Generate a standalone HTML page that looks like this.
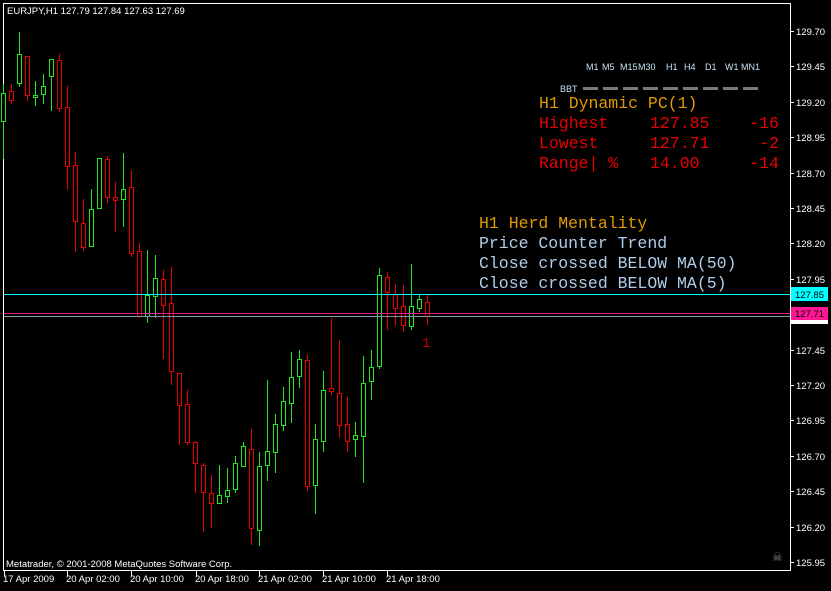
<!DOCTYPE html>
<html><head><meta charset="utf-8"><style>
html,body{margin:0;padding:0;background:#000;width:831px;height:591px;overflow:hidden}
svg{display:block}
.s{font-family:"Liberation Sans",sans-serif;font-size:9.5px;fill:#fff}
.m{font-family:"Liberation Mono",monospace;font-size:16.5px}
</style></head><body>
<svg width="831" height="591" viewBox="0 0 831 591" xmlns="http://www.w3.org/2000/svg">
<rect x="0" y="0" width="831" height="591" fill="#000"/>
<rect x="3.5" y="3.5" width="787" height="567" fill="none" stroke="#fff" stroke-width="1"/>
<g id="c"></g>
<line x1="4" y1="294.5" x2="790" y2="294.5" stroke="#00ffff"/>
<line x1="4" y1="313.5" x2="790" y2="313.5" stroke="#e0208a"/>
<line x1="4" y1="316.5" x2="790" y2="316.5" stroke="#8898a8"/>
<g id="ax"></g>
<rect x="791" y="287" width="37" height="14" fill="#00ffff"/>
<text x="795" y="298" class="s" style="fill:#000">127.85</text>
<rect x="791" y="320" width="37" height="4" fill="#fff"/>
<rect x="791" y="307" width="37" height="13" fill="#ff1493"/>
<text x="795" y="317" class="s" style="fill:#000">127.71</text>
<text x="7" y="14" class="s">EURJPY,H1  127.79 127.84 127.63 127.69</text>
<g class="s" style="fill:#c8e4f4;font-size:9px">
<text x="586" y="70">M1</text><text x="602" y="70">M5</text><text x="620" y="70">M15</text><text x="638" y="70">M30</text>
<text x="666" y="70">H1</text><text x="684" y="70">H4</text><text x="705" y="70">D1</text><text x="725" y="70">W1</text><text x="741" y="70">MN1</text>
<text x="560" y="92">BBT</text>
</g>
<g id="d"></g>
<g class="m">
<text x="539" y="108" fill="#e09a00">H1 Dynamic PC(1)</text>
<text x="539" y="128" fill="#e80000">Highest</text><text x="650" y="128" fill="#e80000">127.85</text><text x="779" y="128" fill="#e80000" text-anchor="end">-16</text>
<text x="539" y="148" fill="#e80000">Lowest</text><text x="650" y="148" fill="#e80000">127.71</text><text x="779" y="148" fill="#e80000" text-anchor="end">-2</text>
<text x="539" y="168" fill="#e80000">Range| %</text><text x="650" y="168" fill="#e80000">14.00</text><text x="779" y="168" fill="#e80000" text-anchor="end">-14</text>
<text x="479" y="228" fill="#e09a00">H1 Herd Mentality</text>
<text x="479" y="248" fill="#b0cce8">Price Counter Trend</text>
<text x="479" y="268" fill="#b0cce8">Close crossed BELOW MA(50)</text>
<text x="479" y="288" fill="#b0cce8">Close crossed BELOW MA(5)</text>
<text x="422" y="347" fill="#c80000" style="font-size:14px">1</text>
</g>
<text x="6" y="567" class="s">Metatrader, © 2001-2008 MetaQuotes Software Corp.</text>
<text x="772" y="561" class="s" style="fill:#888;font-size:12px">☠</text>
<g id="t"></g>
</svg>
<script>
var NS="http://www.w3.org/2000/svg";
function el(p,n,a,t){var e=document.createElementNS(NS,n);for(var k in a)e.setAttribute(k,a[k]);if(t)e.textContent=t;document.getElementById(p).appendChild(e);}
var C=[[3,93,121,84,159,1],[11,91,100,84,104,0],[19,54,83,32,87,1],[27,56,95,56,101,0],[35,95,97,81,106,1],[43,86,94,74,104,1],[51,59,76,59,111,1],[59,60,108,54,112,0],[67,107,166,86,190,0],[75,165,221,152,252,0],[83,223,247,199,251,0],[91,209,246,189,246,1],[99,158,208,158,208,1],[107,159,197,156,203,0],[115,197,200,182,232,0],[123,189,199,153,227,1],[131,187,253,170,257,0],
[139,251,316,243,318,0],[147,295,316,250,323,1],[155,278,296,255,318,1],[163,279,305,270,359,0],[171,303,371,267,385,0],[179,373,405,373,445,0],[187,404,442,390,445,0],[195,442,463,441,493,0],[203,465,492,463,532,0],[211,493,503,475,528,0],[219,495,503,465,503,1],[227,490,496,468,503,1],[235,463,489,456,493,1],[243,446,466,442,467,1],[251,449,528,429,545,0],[259,466,530,452,546,1],[267,451,465,380,481,1],[275,424,452,414,473,1],[283,401,425,387,431,1],[291,377,403,352,423,1],[299,359,376,350,388,1],[307,360,486,354,491,0],[315,439,485,424,514,1],[323,390,441,371,452,1],[331,388,391,318,395,0],[339,393,425,340,438,0],[347,424,441,397,452,0],[355,435,439,422,457,1],[363,383,436,356,483,1],[371,367,381,350,400,1],[379,275,366,268,369,1],[387,277,292,272,330,0],[395,294,308,284,326,0],[403,306,325,285,332,0],[411,306,326,264,330,1],[419,299,308,294,312,1],[427,302,316,294,325,0]];
C.forEach(function(c){var col=c[5]?"#22e622":"#e80000";var x=c[0]+0.5;
el("c","line",{x1:x,y1:c[3],x2:x,y2:c[4],stroke:col});
el("c","rect",{x:c[0]-2+0.5,y:c[1]+0.5,width:4,height:Math.max(1,c[2]-c[1]),fill:"#000",stroke:col});});
var L=["129.70","129.45","129.20","128.95","128.70","128.45","128.20","127.95","","127.45","127.20","126.95","126.70","126.45","126.20","125.95"];
L.forEach(function(s,i){var y=Math.round(31+i*35.4);el("ax","line",{x1:790,y1:y+0.5,x2:794,y2:y+0.5,stroke:"#fff"});if(s)el("ax","text",{x:796,y:y+4,"class":"s"},s);});
for(var i=0;i<9;i++)el("d","rect",{x:583+i*20,y:87,width:15,height:3,fill:"#7a7a7a"});
var T=["17 Apr 2009","20 Apr 02:00","20 Apr 10:00","20 Apr 18:00","21 Apr 02:00","21 Apr 10:00","21 Apr 18:00"],TX=[4,67,131,196,259,323,387];
T.forEach(function(s,i){el("t","line",{x1:TX[i]+0.5,y1:571,x2:TX[i]+0.5,y2:576,stroke:"#fff"});el("t","text",{x:TX[i]-1,y:582,"class":"s"},s);});
</script>
</body></html>
